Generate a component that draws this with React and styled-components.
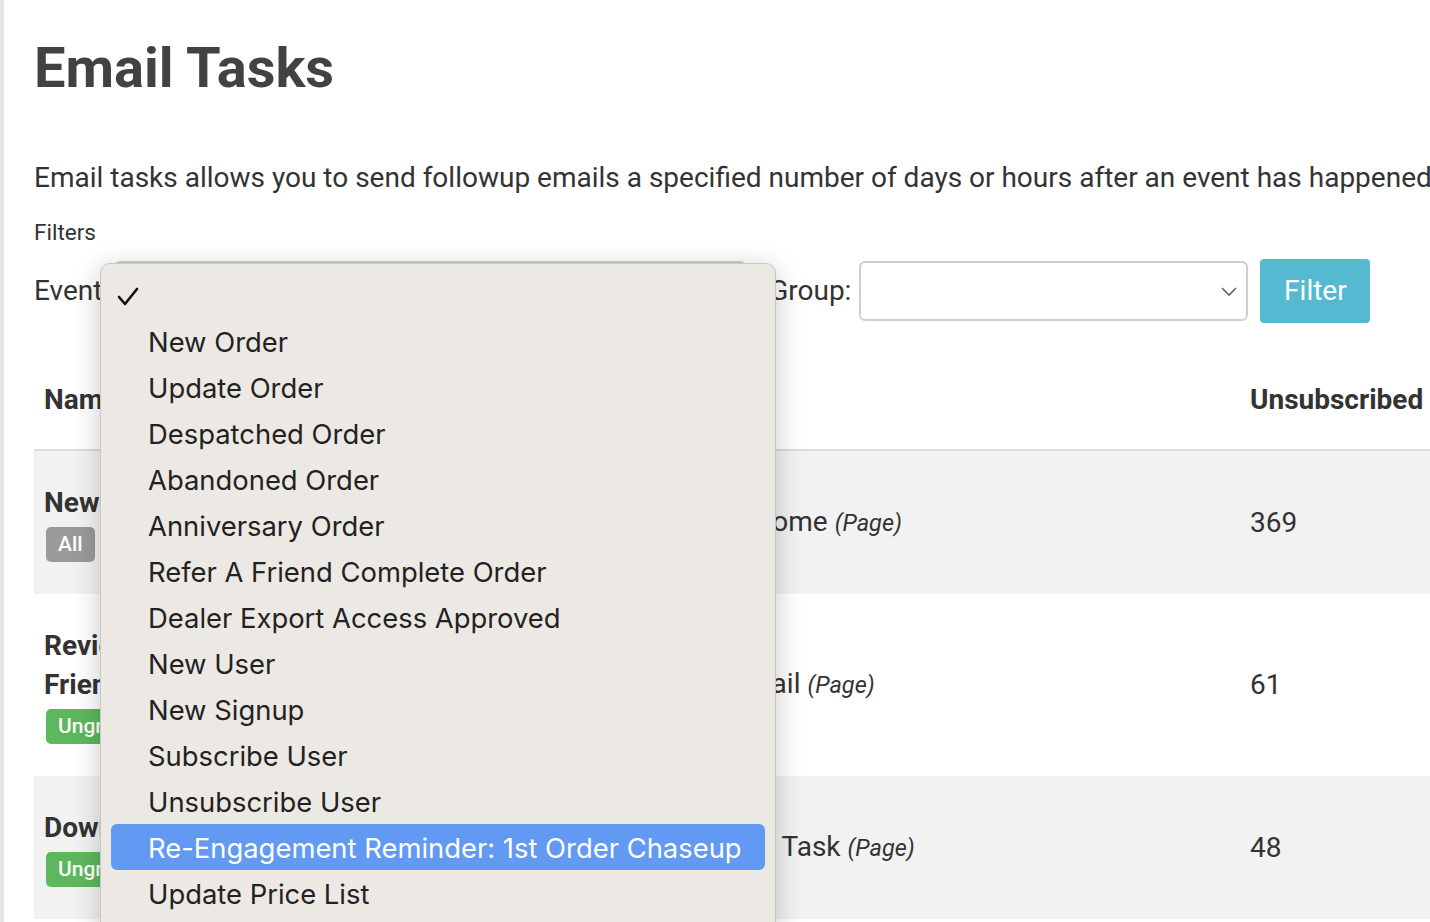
import React from 'react';
import styled, { createGlobalStyle } from 'styled-components';

const GlobalStyle = createGlobalStyle`
  html, body {
    margin: 0;
    padding: 0;
    background: #fff;
  }
  body {
    font-family: Roboto, "Liberation Sans", Arial, sans-serif;
    color: #333;
  }
`;

const Page = styled.div`
  height: 922px;
  overflow: hidden;
  border-left: 4px solid #e7e7e7;
  padding-left: 30px;
  box-sizing: border-box;
`;

const Title = styled.h1`
  margin: 38px 0 0;
  font-size: 56px;
  line-height: 1.1;
  font-weight: 700;
  color: #424242;
`;

const Intro = styled.p`
  margin: 58px 0 0;
  font-size: 28px;
  line-height: 39px;
  white-space: nowrap;
`;

const FiltersLabel = styled.div`
  margin-top: 20px;
  font-size: 22.5px;
  line-height: 30px;
`;

const FilterRow = styled.div`
  position: relative;
  margin-top: 12px;
  height: 64px;
  display: flex;
  align-items: center;
`;

const Label = styled.label`
  font-size: 28px;
  margin-right: ${p => p.$gap || 8}px;
`;

const SelectBox = styled.div`
  box-sizing: border-box;
  width: ${p => p.$width}px;
  height: 60px;
  border: 2px solid #cfcfcf;
  border-radius: 6px;
  background: #fff;
  display: flex;
  align-items: center;
  justify-content: flex-end;
  padding-right: 8px;
  margin-right: ${p => p.$gap || 0}px;
`;

const FilterButton = styled.button`
  height: 64px;
  width: 110px;
  border: none;
  border-radius: 4px;
  background: #55b9d2;
  color: #fff;
  font-family: inherit;
  font-size: 28px;
  margin-left: 12px;
`;

const Menu = styled.div`
  position: absolute;
  left: 66px;
  top: 4px;
  width: 676px;
  height: 700px;
  box-sizing: border-box;
  background: #ece9e5;
  border: 1px solid #c9c6c2;
  border-radius: 10px;
  box-shadow: 0 6px 28px rgba(0, 0, 0, 0.22);
  padding: 8px 10px;
  font-family: Inter, "Noto Sans", sans-serif;
  z-index: 5;
`;

const MenuItem = styled.div`
  position: relative;
  box-sizing: border-box;
  height: 46px;
  display: flex;
  align-items: center;
  padding: 3px 0 0 37px;
  border-radius: 6px;
  font-size: 27.4px;
  color: ${p => (p.$active ? '#fff' : '#222')};
  background: ${p => (p.$active ? '#6199f3' : 'transparent')};
`;

const Check = styled.svg`
  position: absolute;
  left: 6px;
  top: 15px;
`;

const Table = styled.table`
  margin-top: 27px;
  border-collapse: collapse;
  table-layout: fixed;
  width: 1406px;
  font-size: 28px;
`;

const Th = styled.th`
  text-align: left;
  font-weight: 700;
  padding: 30px 10px 30px;
  line-height: 39px;
  border-bottom: 2px solid #dcdcdc;
`;

const Tr = styled.tr`
  background: ${p => (p.$striped ? '#f2f2f2' : '#fff')};
`;

const Td = styled.td`
  padding: 32px 10px 32px;
  line-height: 39px;
  vertical-align: middle;
`;

const NameText = styled.div`
  font-weight: 700;
`;

const Badge = styled.span`
  display: inline-block;
  margin: 5px 0 0 2px;
  padding: 0 12px;
  height: 35px;
  line-height: 35px;
  border-radius: 5px;
  font-size: 21px;
  font-weight: 500;
  color: #fff;
  background: ${p => (p.$green ? '#5db85c' : '#9a9a9a')};
`;

const Kind = styled.em`
  font-size: 23.5px;
`;

const events = [
  '',
  'New Order',
  'Update Order',
  'Despatched Order',
  'Abandoned Order',
  'Anniversary Order',
  'Refer A Friend Complete Order',
  'Dealer Export Access Approved',
  'New User',
  'New Signup',
  'Subscribe User',
  'Unsubscribe User',
  'Re-Engagement Reminder: 1st Order Chaseup',
  'Update Price List',
  'Birthday Reminder',
];

const tasks = [
  { name: 'New Order Welcome', group: 'All', event: 'New Order', template: 'Order Welcome', unsub: 369 },
  { name: 'Review And Refer A Friend', group: 'Ungrouped', green: true, event: 'Despatched Order', template: 'Review Email', unsub: 61 },
  { name: 'Download Reminder', group: 'Ungrouped', green: true, event: 'New Signup', template: 'Downloads Task', unsub: 48 },
];

function Chevron() {
  return (
    <svg width="18" height="12" viewBox="0 0 18 12">
      <polyline points="2,3 9,10 16,3" fill="none" stroke="#666" strokeWidth="1.6" />
    </svg>
  );
}

export default function App() {
  return (
    <>
      <GlobalStyle />
      <Page>
        <Title>Email Tasks</Title>
        <Intro>
          Email tasks allows you to send followup emails a specified number of days or hours after an event has happened.
        </Intro>
        <FiltersLabel>Filters</FiltersLabel>
        <FilterRow>
          <Label $gap={5}>Event:</Label>
          <SelectBox $width={632} $gap={23} />
          <Label>Group:</Label>
          <SelectBox $width={389}>
            <Chevron />
          </SelectBox>
          <FilterButton>Filter</FilterButton>

          <Menu>
            {events.map((e, i) => (
              <MenuItem key={i} $active={i === 12}>
                {i === 0 && (
                  <Check width="22" height="20" viewBox="0 0 22 20">
                    <polyline points="2,10 8,17 20,2" fill="none" stroke="#111" strokeWidth="2.6" strokeLinecap="round" strokeLinejoin="round" />
                  </Check>
                )}
                {e}
              </MenuItem>
            ))}
          </Menu>
        </FilterRow>

        <Table>
          <colgroup>
            <col style={{ width: 300 }} />
            <col style={{ width: 292 }} />
            <col style={{ width: 614 }} />
            <col style={{ width: 200 }} />
          </colgroup>
          <thead>
            <tr>
              <Th>Name</Th>
              <Th>Event</Th>
              <Th>Template</Th>
              <Th>Unsubscribed</Th>
            </tr>
          </thead>
          <tbody>
            {tasks.map((t, i) => (
              <Tr key={t.name} $striped={i % 2 === 0}>
                <Td>
                  <NameText>{t.name}</NameText>
                  <Badge $green={t.green}>{t.group}</Badge>
                </Td>
                <Td>{t.event}</Td>
                <Td>
                  {t.template} <Kind>(Page)</Kind>
                </Td>
                <Td>{t.unsub}</Td>
              </Tr>
            ))}
          </tbody>
        </Table>
      </Page>
    </>
  );
}
